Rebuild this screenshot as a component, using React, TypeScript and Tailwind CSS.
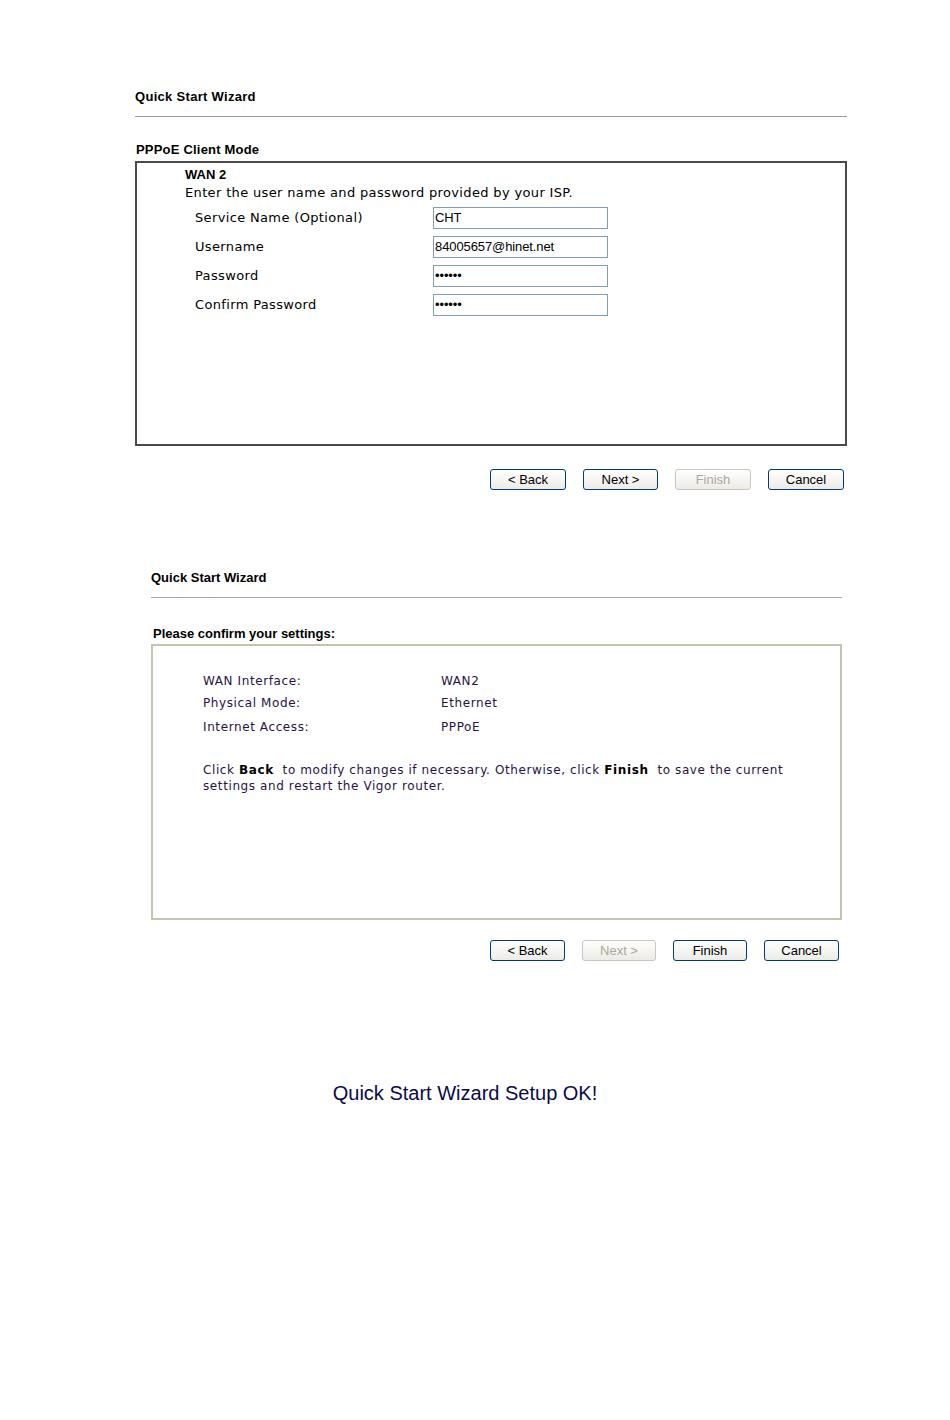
const body = { fontFamily: '"DejaVu Sans", Verdana, sans-serif' }
const arial = { fontFamily: '"Liberation Sans", Arial, sans-serif' }

function XpButton({ label, disabled, w }: { label: string; disabled?: boolean; w: string }) {
  return (
    <button
      disabled={disabled}
      style={arial}
      className={`${w} h-[21px] rounded-[3px] border text-[13px] leading-none bg-gradient-to-b from-white to-[#ecebe6] ${
        disabled ? 'border-[#c9c7ba] text-[#aca899]' : 'border-[#003c74] text-black'
      }`}
    >
      {label}
    </button>
  )
}

function Field({ label, value }: { label: string; value: string }) {
  return (
    <div className="flex items-center h-[29px]">
      <span className="w-[248px] pl-[10px]">{label}</span>
      <div
        style={arial}
        className="w-[175px] h-[22px] border border-[#7f9db9] bg-white flex items-center pl-[1px] text-[13px] text-black tracking-[-0.1px]"
      >
        {value}
      </div>
    </div>
  )
}

export default function App() {
  return (
    <div className="w-[950px] min-h-[1420px] bg-white text-black">
      {/* PPPoE step */}
      <div className="ml-[135px] w-[712px] pt-[89px]">
        <h1 style={arial} className="text-[13px] font-bold leading-4 tracking-[0.3px]">Quick Start Wizard</h1>
        <div className="mt-[11px] h-px bg-[#9a9a9a]" />
        <h2 style={arial} className="mt-[25px] ml-px text-[13px] font-bold leading-4 tracking-[0.2px]">PPPoE Client Mode</h2>
        <div style={body} className="mt-[3px] h-[285px] border-2 border-[#4a4a4a] pl-[48px] pt-[4px] text-[13px] leading-4 tracking-[0.35px]">
          <div style={arial} className="font-bold text-[13px] tracking-normal">WAN 2</div>
          <div className="mt-[2px]">Enter the user name and password provided by your ISP.</div>
          <div className="mt-[2px]">
            <Field label="Service Name (Optional)" value="CHT" />
            <Field label="Username" value="84005657@hinet.net" />
            <Field label="Password" value="••••••" />
            <Field label="Confirm Password" value="••••••" />
          </div>
        </div>
        <div className="mt-[23px] mr-[3px] flex justify-end gap-[17px]">
          <XpButton label="< Back" w="w-[76px]" />
          <XpButton label="Next >" w="w-[75px]" />
          <XpButton label="Finish" w="w-[76px]" disabled />
          <XpButton label="Cancel" w="w-[76px]" />
        </div>
      </div>

      {/* Confirm step */}
      <div className="ml-[151px] w-[691px] mt-[80px]">
        <h1 style={arial} className="text-[13px] font-bold leading-4">Quick Start Wizard</h1>
        <div className="mt-[11px] h-px bg-[#aca899]" />
        <h2 style={arial} className="mt-[28px] ml-[2px] text-[13px] font-bold leading-4">Please confirm your settings:</h2>
        <div style={body} className="mt-[2px] h-[276px] border-2 border-[#c5c2ad] pl-[50px] pt-[27px] text-[12px] leading-4 text-[#2a1242] tracking-[0.6px]">
          <div className="grid grid-cols-[238px_1fr] gap-y-[6px]">
            <span>WAN Interface:</span>
            <span>WAN2</span>
            <span>Physical Mode:</span>
            <span>Ethernet</span>
            <span className="mt-[2px]">Internet Access:</span>
            <span className="mt-[2px]">PPPoE</span>
          </div>
          <p className="mt-[27px] w-[585px]">
            Click <b className="text-black">Back</b>&nbsp; to modify changes if necessary. Otherwise, click{' '}
            <b className="text-black">Finish</b>&nbsp; to save the current settings and restart the Vigor router.
          </p>
        </div>
        <div className="mt-[20px] mr-[3px] flex justify-end gap-[17px]">
          <XpButton label="< Back" w="w-[75px]" />
          <XpButton label="Next >" w="w-[74px]" disabled />
          <XpButton label="Finish" w="w-[74px]" />
          <XpButton label="Cancel" w="w-[75px]" />
        </div>
      </div>

      {/* Done */}
      <div style={arial} className="mt-[120px] pr-[20px] text-center text-[20px] leading-6 text-[#0a0a4a]">
        Quick Start Wizard Setup OK!
      </div>
    </div>
  )
}
